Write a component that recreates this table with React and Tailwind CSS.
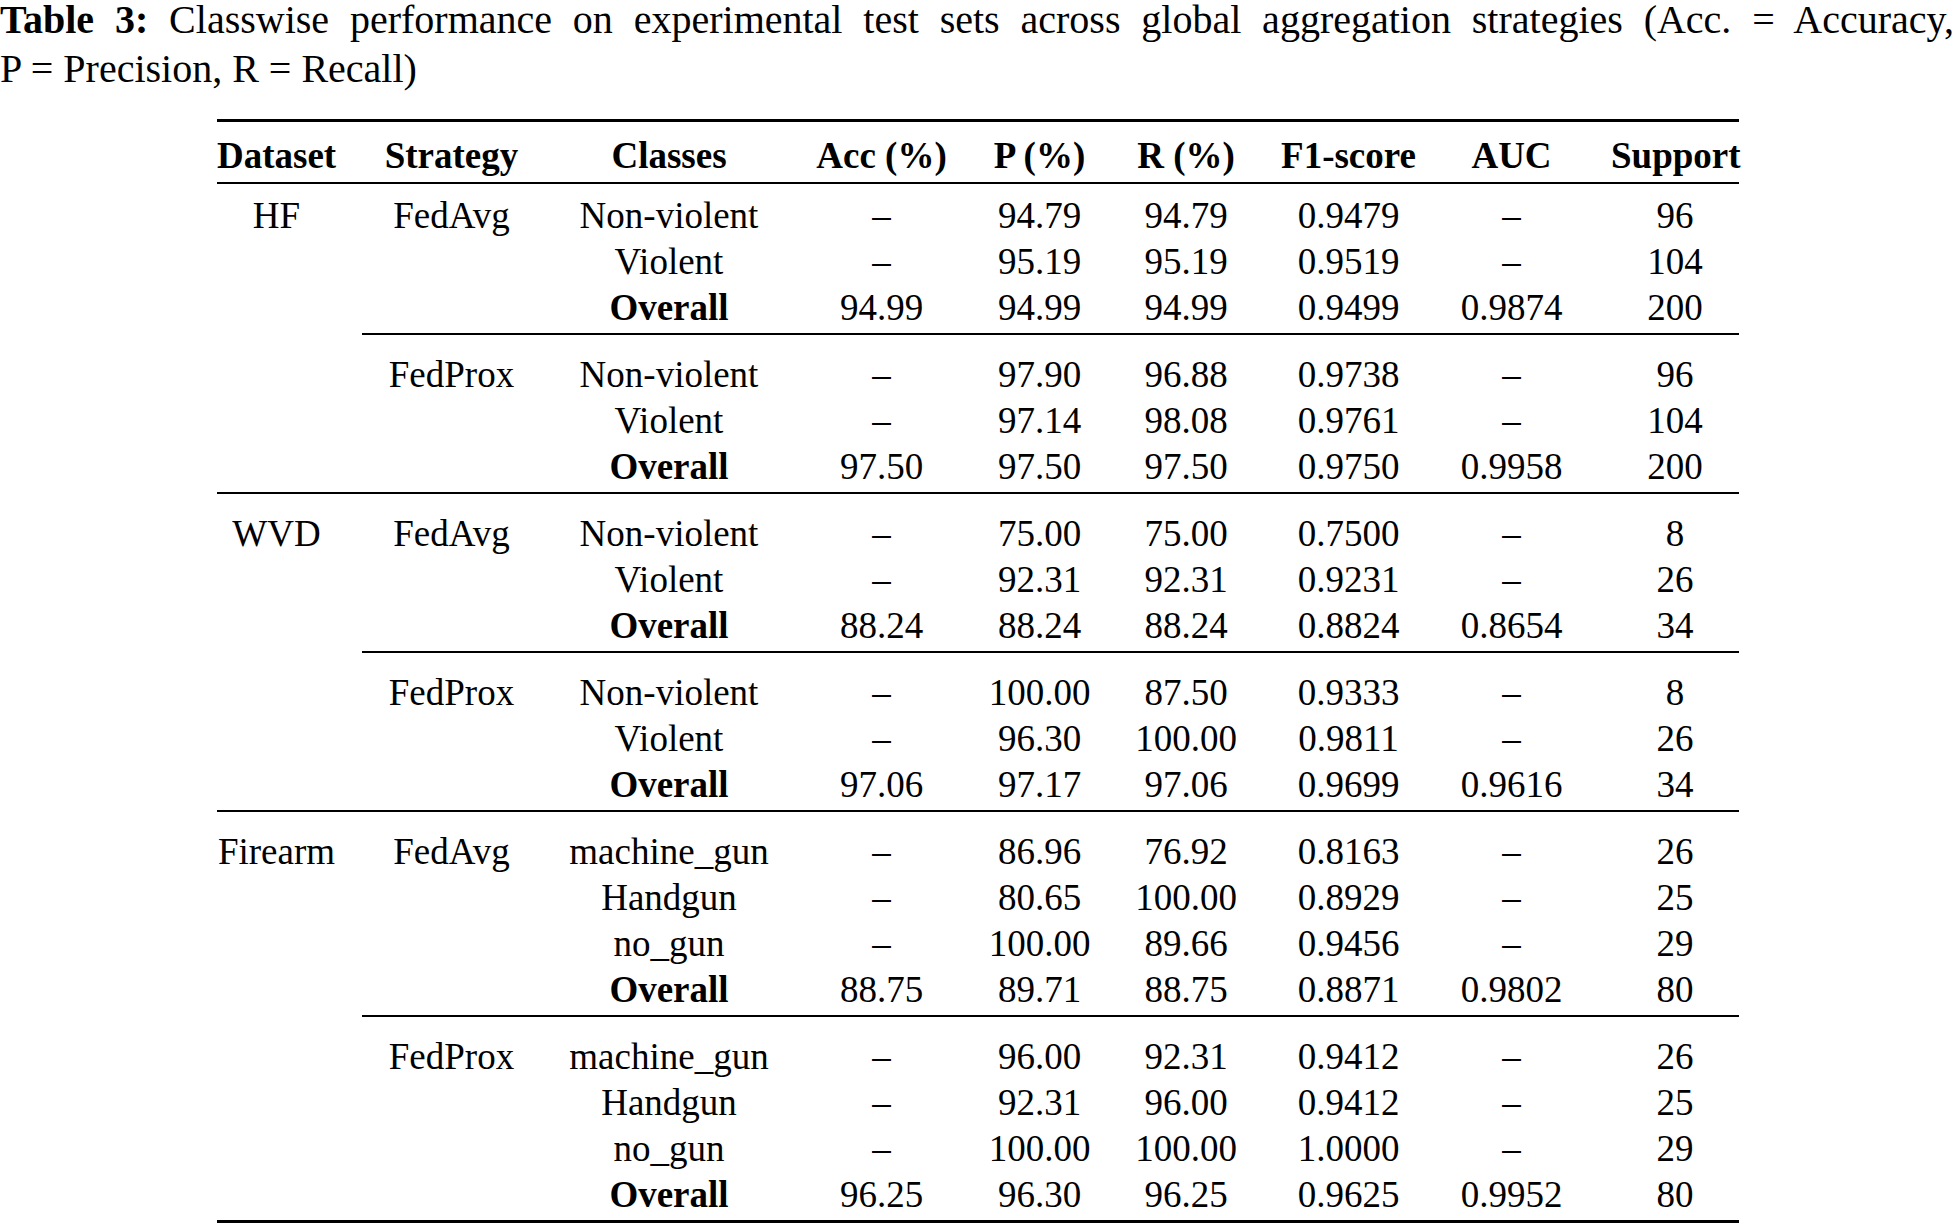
import React from 'react';

const cols = 'grid grid-cols-[145px_179px_256px_169px_147px_146px_179px_147px_154px]';

const headers = ['Dataset', 'Strategy', 'Classes', 'Acc (%)', 'P (%)', 'R (%)', 'F1-score', 'AUC', 'Support'];

const groups = [
  {
    dataset: 'HF',
    strategy: 'FedAvg',
    rows: [
      ['Non-violent', '–', '94.79', '94.79', '0.9479', '–', '96'],
      ['Violent', '–', '95.19', '95.19', '0.9519', '–', '104'],
      ['Overall', '94.99', '94.99', '94.99', '0.9499', '0.9874', '200'],
    ],
  },
  {
    strategy: 'FedProx',
    rows: [
      ['Non-violent', '–', '97.90', '96.88', '0.9738', '–', '96'],
      ['Violent', '–', '97.14', '98.08', '0.9761', '–', '104'],
      ['Overall', '97.50', '97.50', '97.50', '0.9750', '0.9958', '200'],
    ],
    last: true,
  },
  {
    dataset: 'WVD',
    strategy: 'FedAvg',
    rows: [
      ['Non-violent', '–', '75.00', '75.00', '0.7500', '–', '8'],
      ['Violent', '–', '92.31', '92.31', '0.9231', '–', '26'],
      ['Overall', '88.24', '88.24', '88.24', '0.8824', '0.8654', '34'],
    ],
  },
  {
    strategy: 'FedProx',
    rows: [
      ['Non-violent', '–', '100.00', '87.50', '0.9333', '–', '8'],
      ['Violent', '–', '96.30', '100.00', '0.9811', '–', '26'],
      ['Overall', '97.06', '97.17', '97.06', '0.9699', '0.9616', '34'],
    ],
    last: true,
  },
  {
    dataset: 'Firearm',
    strategy: 'FedAvg',
    rows: [
      ['machine_gun', '–', '86.96', '76.92', '0.8163', '–', '26'],
      ['Handgun', '–', '80.65', '100.00', '0.8929', '–', '25'],
      ['no_gun', '–', '100.00', '89.66', '0.9456', '–', '29'],
      ['Overall', '88.75', '89.71', '88.75', '0.8871', '0.9802', '80'],
    ],
  },
  {
    strategy: 'FedProx',
    rows: [
      ['machine_gun', '–', '96.00', '92.31', '0.9412', '–', '26'],
      ['Handgun', '–', '92.31', '96.00', '0.9412', '–', '25'],
      ['no_gun', '–', '100.00', '100.00', '1.0000', '–', '29'],
      ['Overall', '96.25', '96.30', '96.25', '0.9625', '0.9952', '80'],
    ],
    end: true,
  },
];

const Group = ({ group, first }) => (
  <div className={`${cols} ${first ? 'pt-[9px]' : 'pt-[17px]'} pb-[2px]`}>
    {group.rows.map((row, i) => (
      <React.Fragment key={i}>
        <div className="pr-[26px] text-center">{i === 0 ? group.dataset : ''}</div>
        <div className="text-center">{i === 0 ? group.strategy : ''}</div>
        {row.map((cell, j) => (
          <div
            key={j}
            className={`text-center ${j === 0 && cell === 'Overall' ? 'font-bold' : ''} ${j === 6 ? 'pl-[26px]' : ''}`}
          >
            {cell}
          </div>
        ))}
      </React.Fragment>
    ))}
  </div>
);

const App = () => {
  return (
    <div className="w-[1954px] h-[1225px] overflow-hidden bg-white text-black font-['Liberation_Serif',serif]">
      <div className="text-[40px]">
        <p className="leading-[40px] text-justify [text-align-last:justify]">
          <span className="font-bold">Table 3:</span> Classwise performance on experimental test sets across global aggregation strategies (Acc. = Accuracy,
        </p>
        <p className="mt-[4px] leading-[50px]">P = Precision, R = Recall)</p>
      </div>

      <div className="ml-[217px] mt-[25px] w-[1522px] text-[37px] leading-[46px]">
        <div className="h-[3px] bg-black" />
        <div className={`${cols} pt-[11px] pb-[3px] font-bold`}>
          {headers.map((h, i) => (
            <div key={h} className={`text-center ${i === 0 ? 'pr-[26px]' : ''} ${i === 8 ? 'pl-[26px]' : ''}`}>
              {h}
            </div>
          ))}
        </div>
        <div className="h-[2px] bg-black" />
        {groups.map((g, i) => (
          <React.Fragment key={i}>
            <Group group={g} first={i === 0} />
            {g.end ? (
              <div className="h-[3px] bg-black" />
            ) : g.last ? (
              <div className="h-[2px] bg-black" />
            ) : (
              <div className="ml-[145px] h-[2px] bg-black" />
            )}
          </React.Fragment>
        ))}
      </div>
    </div>
  );
};

export default App;
